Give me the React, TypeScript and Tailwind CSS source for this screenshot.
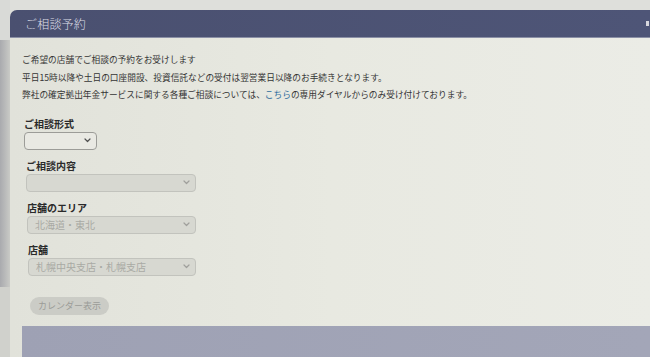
import React from "react";

const Chevron = ({ color = "#6b6b6b" }: { color?: string }) => (
  <svg width="7" height="5" viewBox="0 0 7 5" fill="none">
    <path d="M1 1l2.5 2.5L6 1" stroke={color} strokeWidth="1.2" strokeLinecap="round" strokeLinejoin="round" />
  </svg>
);

function Field({
  label,
  value,
  width,
  enabled,
  ml,
}: {
  label: string;
  value?: string;
  width: string;
  enabled?: boolean;
  ml: string;
}) {
  return (
    <div className={`flex flex-col ${ml}`}>
      <div className="h-[13px] text-[10px] leading-[13px] font-bold text-[#2a2a2a]">{label}</div>
      <div
        className={
          enabled
            ? `mt-[2px] h-[18px] ${width} rounded-[4px] border border-[#9c9c98] bg-[#e9e9e3] flex items-center justify-end pr-[5px]`
            : `mt-[2px] h-[18px] ${width} rounded-[4px] border border-[#c2c3bd] bg-[#d7d8d1] flex items-center justify-between pl-[7px] pr-[5px]`
        }
      >
        {value ? (
          <span className="text-[10px] leading-none text-[#a9aaa4]">{value}</span>
        ) : (
          <span />
        )}
        <Chevron color={enabled ? "#505050" : "#a0a09c"} />
      </div>
    </div>
  );
}

export default function App() {
  return (
    <div
      className="w-[650px] h-[357px] overflow-hidden bg-[#dedfdb] flex"
      style={{ fontFamily: '"Noto Sans CJK JP", "Noto Sans", sans-serif' }}
    >
      <div className="w-[10px] h-full flex flex-col bg-[#d3d4d1]">
        <div className="h-[40px] bg-[#d9dad7]" />
        <div className="flex-1 bg-gradient-to-r from-[#a9aaae] to-[#c9cac6]" />
        <div className="h-[70px] bg-[#d0d1cc]" />
      </div>
      <div className="flex-1 flex flex-col pt-[10px]">
        <div className="h-[28px] rounded-tl-[7px] bg-gradient-to-r from-[#4a5070] to-[#4e5577] flex items-center justify-between pl-[15px] pr-[1px] border-b border-[#8b90a6]">
          <span className="text-[12px] font-light text-[#dcdde6] tracking-[0.2px]">ご相談予約</span>
          <span className="w-[3px] h-[5px] bg-[#d8d8de]" />
        </div>
        <div className="flex-1 flex flex-col bg-gradient-to-r from-[#e1e2da] via-[#e8e9e1] to-[#ebece6]">
          <div className="pl-[12px] pt-[13px] text-[8.7px] leading-[17.5px] text-[#353535]">
            <div>ご希望の店舗でご相談の予約をお受けします</div>
            <div>平日15時以降や土日の口座開設、投資信託などの受付は翌営業日以降のお手続きとなります。</div>
            <div>
              弊社の確定拠出年金サービスに関する各種ご相談については、
              <span className="text-[#2d6b9c]">こちら</span>
              の専用ダイヤルからのみ受け付けております。
            </div>
          </div>
          <div className="flex flex-col gap-[9px] mt-[13px]">
            <Field label="ご相談形式" width="w-[73px]" enabled ml="ml-[14px]" />
            <Field label="ご相談内容" width="w-[170px]" ml="ml-[16px]" />
            <Field label="店舗のエリア" value="北海道・東北" width="w-[169px]" ml="ml-[17px]" />
            <Field label="店舗" value="札幌中央支店・札幌支店" width="w-[168px]" ml="ml-[18px]" />
          </div>
          <div className="flex ml-[20px] mt-[21px]">
            <div className="flex items-center h-[18px] w-[79px] justify-center rounded-full bg-[#cbccc6] text-[9px] leading-none text-[#9b9c98]">
              カレンダー表示
            </div>
          </div>
          <div className="flex-1" />
          <div className="ml-[12px] h-[31px] bg-gradient-to-r from-[#9ea1b4] to-[#a3a6b8]" />
        </div>
      </div>
    </div>
  );
}
